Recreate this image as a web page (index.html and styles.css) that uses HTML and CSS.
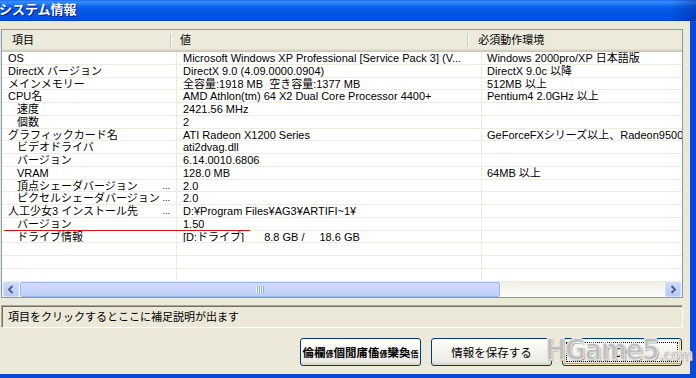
FILE: index.html
```html
<!DOCTYPE html>
<html lang="ja">
<head>
    <meta charset="UTF-8">
    <title>システム情報</title>
    <link rel="stylesheet" href="styles.css">
</head>
<body>
    <div class="window">
        <!-- Title bar -->
        <div class="titlebar"><span class="title">システム情報</span></div>

        <div class="main">
            <!-- List view -->
            <div class="listview">
                <div class="lv-head">
                    <div class="hcell h1">項目</div>
                    <div class="hcell h2">値</div>
                    <div class="hcell h3">必須動作環境</div>
                </div>
                <div class="lv-rows">
                    <div class="row"><div class="c1">OS</div><div class="c2">Microsoft Windows XP Professional [Service Pack 3] (V...</div><div class="c3">Windows 2000pro/XP 日本語版</div></div>
                    <div class="row"><div class="c1">DirectX バージョン</div><div class="c2">DirectX 9.0 (4.09.0000.0904)</div><div class="c3">DirectX 9.0c 以降</div></div>
                    <div class="row"><div class="c1">メインメモリー</div><div class="c2">全容量:1918 MB&nbsp; 空き容量:1377 MB</div><div class="c3">512MB 以上</div></div>
                    <div class="row"><div class="c1">CPU名</div><div class="c2">AMD Athlon(tm) 64 X2 Dual Core Processor 4400+</div><div class="c3">Pentium4 2.0GHz 以上</div></div>
                    <div class="row"><div class="c1 sub">速度</div><div class="c2">2421.56 MHz</div><div class="c3"></div></div>
                    <div class="row"><div class="c1 sub">個数</div><div class="c2">2</div><div class="c3"></div></div>
                    <div class="row"><div class="c1">グラフィックカード名</div><div class="c2">ATI Radeon X1200 Series</div><div class="c3">GeForceFXシリーズ以上、Radeon9500</div></div>
                    <div class="row"><div class="c1 sub">ビデオドライバ</div><div class="c2">ati2dvag.dll</div><div class="c3"></div></div>
                    <div class="row"><div class="c1 sub">バージョン</div><div class="c2">6.14.0010.6806</div><div class="c3"></div></div>
                    <div class="row"><div class="c1 sub">VRAM</div><div class="c2">128.0 MB</div><div class="c3">64MB 以上</div></div>
                    <div class="row"><div class="c1 sub">頂点シェーダバージョン<span class="dots">...</span></div><div class="c2">2.0</div><div class="c3"></div></div>
                    <div class="row"><div class="c1 sub">ピクセルシェーダバージョン<span class="dots">...</span></div><div class="c2">2.0</div><div class="c3"></div></div>
                    <div class="row"><div class="c1">人工少女3 インストール先<span class="dots">...</span></div><div class="c2">D:¥Program Files¥AG3¥ARTIFI~1¥</div><div class="c3"></div></div>
                    <div class="row mark"><div class="c1 sub">バージョン</div><div class="c2">1.50</div><div class="c3"></div></div>
                    <div class="row"><div class="c1 sub">ドライブ情報</div><div class="c2">[D:ドライブ]<span class="gap1">8.8 GB /</span><span class="gap2">18.6 GB</span></div><div class="c3"></div></div>
                    <div class="row"><div class="c1"></div><div class="c2"></div><div class="c3"></div></div>
                    <div class="row"><div class="c1"></div><div class="c2"></div><div class="c3"></div></div>
                    <div class="row"><div class="c1"></div><div class="c2"></div><div class="c3"></div></div>
                </div>
                <!-- Horizontal scroll bar -->
                <div class="hscroll">
                    <div class="sb-btn">
                        <svg width="8" height="9" viewBox="0 0 8 9"><polyline points="5.5,1 2,4.5 5.5,8" fill="none" stroke="#4d6185" stroke-width="2"/></svg>
                    </div>
                    <div class="sb-thumb">
                        <svg width="8" height="7" viewBox="0 0 8 7">
                            <rect x="0" y="0" width="1" height="7" fill="#eef4fe"/><rect x="1" y="0" width="1" height="7" fill="#8cb0f8"/>
                            <rect x="2" y="0" width="1" height="7" fill="#eef4fe"/><rect x="3" y="0" width="1" height="7" fill="#8cb0f8"/>
                            <rect x="4" y="0" width="1" height="7" fill="#eef4fe"/><rect x="5" y="0" width="1" height="7" fill="#8cb0f8"/>
                            <rect x="6" y="0" width="1" height="7" fill="#eef4fe"/><rect x="7" y="0" width="1" height="7" fill="#8cb0f8"/>
                        </svg>
                    </div>
                    <div class="sb-track"></div>
                    <div class="sb-btn">
                        <svg width="8" height="9" viewBox="0 0 8 9"><polyline points="2.5,1 6,4.5 2.5,8" fill="none" stroke="#4d6185" stroke-width="2"/></svg>
                    </div>
                </div>
            </div>

            <!-- Hint box -->
            <div class="status">項目をクリックするとここに補足説明が出ます</div>

            <!-- Buttons -->
            <div class="buttons">
                <button class="btn odd">倫欄<span class="sm">偐</span>個閒庯傗<span class="sm">偐</span>欒奐<span class="sm">俉</span></button>
                <button class="btn">情報を保存する</button>
                <button class="btn default">OK</button>
            </div>
        </div>

        <div class="watermark">HGame5<span class="wm-small">.com</span></div>
    </div>
</body>
</html>
```

FILE: styles.css
```css
body {
    margin: 0;
    font-family: "Liberation Sans", "Noto Sans CJK JP", sans-serif;
    font-size: 11px;
    background-color: #ece9d8;
}
.window {
    width: 696px;
    height: 378px;
    display: flex;
    flex-direction: column;
    position: relative;
    overflow: hidden;
}
.titlebar {
    height: 21px;
    flex: none;
    background-image:
        linear-gradient(to right, rgba(0, 20, 120, 0) 670px, rgba(0, 20, 120, 0.35) 696px),
        linear-gradient(#0a5ef0 0, #3a8cfb 1px, #2b85fb 3px, #0f68ee 6px, #0558e6 10px, #0353e3 16px, #0450e0 19px, #0343d2 21px);
    color: white;
    font-family: "Noto Sans CJK JP", sans-serif;
    font-weight: bold;
    font-size: 13px;
    line-height: 18px;
}
.title {
    margin-left: -1px;
    text-shadow: 1px 1px #0a1883;
}
.main {
    flex: 1;
    display: flex;
    flex-direction: column;
    padding: 8px 7px 8px 1px;
    border-right: 6px solid #0a48d8;
    border-bottom: 4px solid #0a48d8;
    min-height: 0;
}

/* list view */
.listview {
    height: 269px;
    flex: none;
    box-sizing: border-box;
    border: 1px solid #7f9db9;
    background-color: white;
    display: flex;
    flex-direction: column;
    overflow: hidden;
}
.lv-head {
    height: 22px;
    flex: none;
    display: flex;
    background-color: #ebeadb;
    box-shadow: inset 0 -1px #cbc7b8, inset 0 -2px #d6d2c2, inset 0 -3px #e2decd;
}
.hcell {
    position: relative;
    box-sizing: border-box;
    line-height: 19px;
    padding-top: 1px;
    white-space: nowrap;
}
.hcell::after {
    content: "";
    position: absolute;
    right: 0;
    top: 4px;
    bottom: 5px;
    width: 1px;
    background-color: #c7c5b2;
    box-shadow: 1px 0 white;
}
.h1 {
    width: 174px;
    padding-left: 10px;
}
.h2 {
    width: 306px;
    padding-left: 9px;
}
.h3 {
    width: 220px;
    padding-left: 10px;
}
.h3::after {
    display: none;
}
.lv-rows {
    flex: 1;
    overflow: hidden;
}
.row {
    height: 12.75px;
    box-sizing: border-box;
    display: flex;
    border-bottom: 1px solid #efebdd;
    line-height: 12px;
    position: relative;
    white-space: nowrap;
}
.row > div {
    box-sizing: border-box;
    overflow: hidden;
    flex: none;
}
.c1 {
    width: 175px;
    padding-left: 6px;
    padding-right: 6px;
    border-right: 1px solid #efebdd;
    display: flex;
}
.c1.sub {
    padding-left: 15px;
}
.c2 {
    width: 305px;
    padding-left: 6px;
    border-right: 1px solid #efebdd;
}
.c3 {
    width: 260px;
    padding-left: 5px;
}
.dots {
    margin-left: auto;
    font-size: 9px;
}
.gap1 {
    margin-left: 20px;
}
.gap2 {
    margin-left: 15px;
}
.row.mark::after {
    content: "";
    position: absolute;
    left: 2px;
    bottom: -1px;
    width: 246px;
    height: 1px;
    background-color: #e01010;
}

/* scroll bar */
.hscroll {
    height: 15px;
    flex: none;
    display: flex;
    gap: 1px;
    padding: 0 1px;
    background: linear-gradient(#f1efe8, #fdfdfa);
}
.sb-btn {
    width: 16px;
    height: 15px;
    box-sizing: border-box;
    border: 1px solid #d2defa;
    border-radius: 2px;
    background: linear-gradient(#cbdafd, #b6c9f7);
    display: flex;
    align-items: center;
    justify-content: center;
}
.sb-thumb {
    width: 480px;
    height: 15px;
    box-sizing: border-box;
    border: 1px solid #9fb8f0;
    border-radius: 2px;
    background: linear-gradient(#cfdcfc, #bdcff9);
    display: flex;
    align-items: center;
    justify-content: center;
}
.sb-track {
    flex: 1;
}

/* hint box */
.status {
    height: 23px;
    flex: none;
    margin-top: 7px;
    box-sizing: border-box;
    border-top: 1px solid #aca899;
    border-left: 1px solid #aca899;
    border-right: 1px solid white;
    border-bottom: 1px solid white;
    box-shadow: inset 1px 1px #716f64;
    padding-left: 6px;
    line-height: 21px;
    font-family: "Noto Sans CJK JP", sans-serif;
}

/* buttons */
.buttons {
    display: flex;
    justify-content: flex-end;
    gap: 10px;
    margin-top: 10px;
    padding-right: 1px;
    height: 28px;
    flex: none;
}
.btn {
    width: 121px;
    height: 28px;
    position: relative;
    border: 1px solid #003c74;
    border-radius: 3px;
    background: linear-gradient(#ffffff, #f5f4ef 45%, #ecebe5 85%, #d8d2c6);
    font-family: "Noto Sans CJK JP", sans-serif;
    font-size: 11.5px;
    color: black;
    padding: 0;
}
.btn.odd {
    font-weight: bold;
}
.btn .sm {
    font-size: 8px;
}
.btn.default {
    width: 120px;
    box-shadow: inset 0 0 0 1px #ffe7a6, inset 0 -2px #e5a03b, inset 2px 0 #f6c965, inset -2px 0 #f6c965;
}
.btn.default::after {
    content: "";
    position: absolute;
    left: 3px;
    top: 3px;
    right: 3px;
    bottom: 3px;
    border: 1px dotted black;
}

/* watermark over the buttons */
.watermark {
    position: absolute;
    left: 545px;
    top: 332px;
    font-family: "DejaVu Sans", sans-serif;
    font-weight: bold;
    font-size: 31px;
    line-height: 34px;
    letter-spacing: -1.5px;
    transform: scaleX(0.82);
    transform-origin: left top;
    color: rgba(196, 196, 196, 0.95);
    -webkit-text-stroke: 1px #f2f2f2;
    text-shadow: 1px 1px 1px #7d7d7d;
}
.wm-small {
    font-size: 16px;
    letter-spacing: -0.5px;
}
```
